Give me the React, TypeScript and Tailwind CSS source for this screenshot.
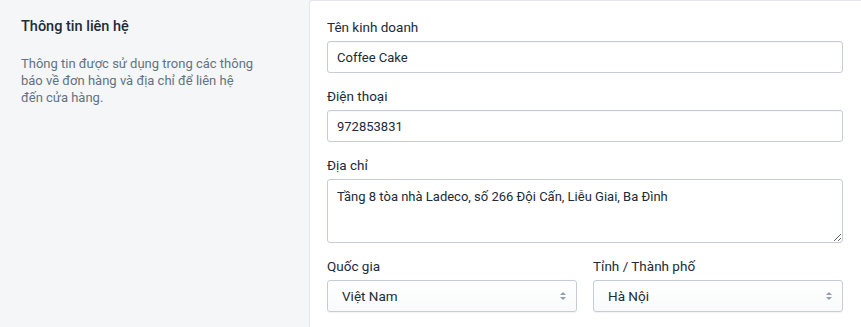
import { useState } from 'react'

function SelectArrows() {
  return (
    <svg aria-hidden="true" className="pointer-events-none absolute right-[10px] top-1/2 -translate-y-1/2" height="10" viewBox="0 0 8 10" width="8">
      <path d="M4 1 L7 4 H1 Z" fill="#919eab" />
      <path d="M4 9 L7 6 H1 Z" fill="#919eab" />
    </svg>
  )
}

type FieldProps = {
  label: string
  children: React.ReactNode
}

function Field({ label, children }: FieldProps) {
  return (
    <label className="flex flex-col">
      <span className="mb-1 text-[13.5px] leading-5 text-[#212b36]">{label}</span>
      {children}
    </label>
  )
}

export default function App() {
  const [name, setName] = useState('Coffee Cake')
  const [phone, setPhone] = useState('972853831')
  const [address, setAddress] = useState('Tầng 8 tòa nhà Ladeco, số 266 Đội Cấn, Liễu Giai, Ba Đình')
  const [country, setCountry] = useState('Việt Nam')
  const [city, setCity] = useState('Hà Nội')

  const inputClass =
    'h-8 w-full rounded-[3px] border border-[#c4cdd5] bg-white px-[9px] text-[13px] text-[#212b36] shadow-[inset_0_1px_0_0_rgba(99,115,129,0.05)] outline-none'
  const selectClass =
    'h-8 w-full appearance-none rounded-[3px] border border-[#c4cdd5] bg-gradient-to-b from-white to-[#f9fafb] pl-[14px] pr-8 text-[13.5px] text-[#212b36] shadow-[0_1px_0_0_rgba(22,29,37,0.05)] outline-none'

  return (
    <div className="grid min-h-[327px] grid-cols-[309px_1fr] bg-[#f4f6f8] font-['Roboto',sans-serif]">
      <aside className="pl-[21px] pr-10 pt-[17px]">
        <h2 className="text-[14.5px] font-medium leading-5 text-[#212b36]">Thông tin liên hệ</h2>
        <p className="mt-[18px] text-[13px] leading-[17px] text-[#637381]">
          Thông tin được sử dụng trong các thông
          <br />
          báo về đơn hàng và địa chỉ để liên hệ
          <br />
          đến cửa hàng.
        </p>
      </aside>

      <section className="rounded-tl-[3px] border-l border-t border-[#e3e7eb] bg-white pb-4 pl-[17px] pr-[18px] pt-[16px]">
        <div className="flex flex-col gap-[13px]">
          <Field label="Tên kinh doanh">
            <input className={inputClass} onChange={(e) => setName(e.target.value)} value={name} />
          </Field>
          <Field label="Điện thoại">
            <input className={inputClass} onChange={(e) => setPhone(e.target.value)} value={phone} />
          </Field>
          <Field label="Địa chỉ">
            <textarea
              className="h-[64px] w-full rounded-[3px] border border-[#c4cdd5] bg-white px-[9px] py-[7px] text-[13px] leading-5 text-[#212b36] outline-none"
              onChange={(e) => setAddress(e.target.value)}
              value={address}
            />
          </Field>
          <div className="grid grid-cols-2 gap-4">
            <Field label="Quốc gia">
              <div className="relative">
                <select className={selectClass} onChange={(e) => setCountry(e.target.value)} value={country}>
                  <option>Việt Nam</option>
                </select>
                <SelectArrows />
              </div>
            </Field>
            <Field label="Tỉnh / Thành phố">
              <div className="relative">
                <select className={selectClass} onChange={(e) => setCity(e.target.value)} value={city}>
                  <option>Hà Nội</option>
                  <option>Hồ Chí Minh</option>
                  <option>Đà Nẵng</option>
                </select>
                <SelectArrows />
              </div>
            </Field>
          </div>
        </div>
      </section>
    </div>
  )
}
